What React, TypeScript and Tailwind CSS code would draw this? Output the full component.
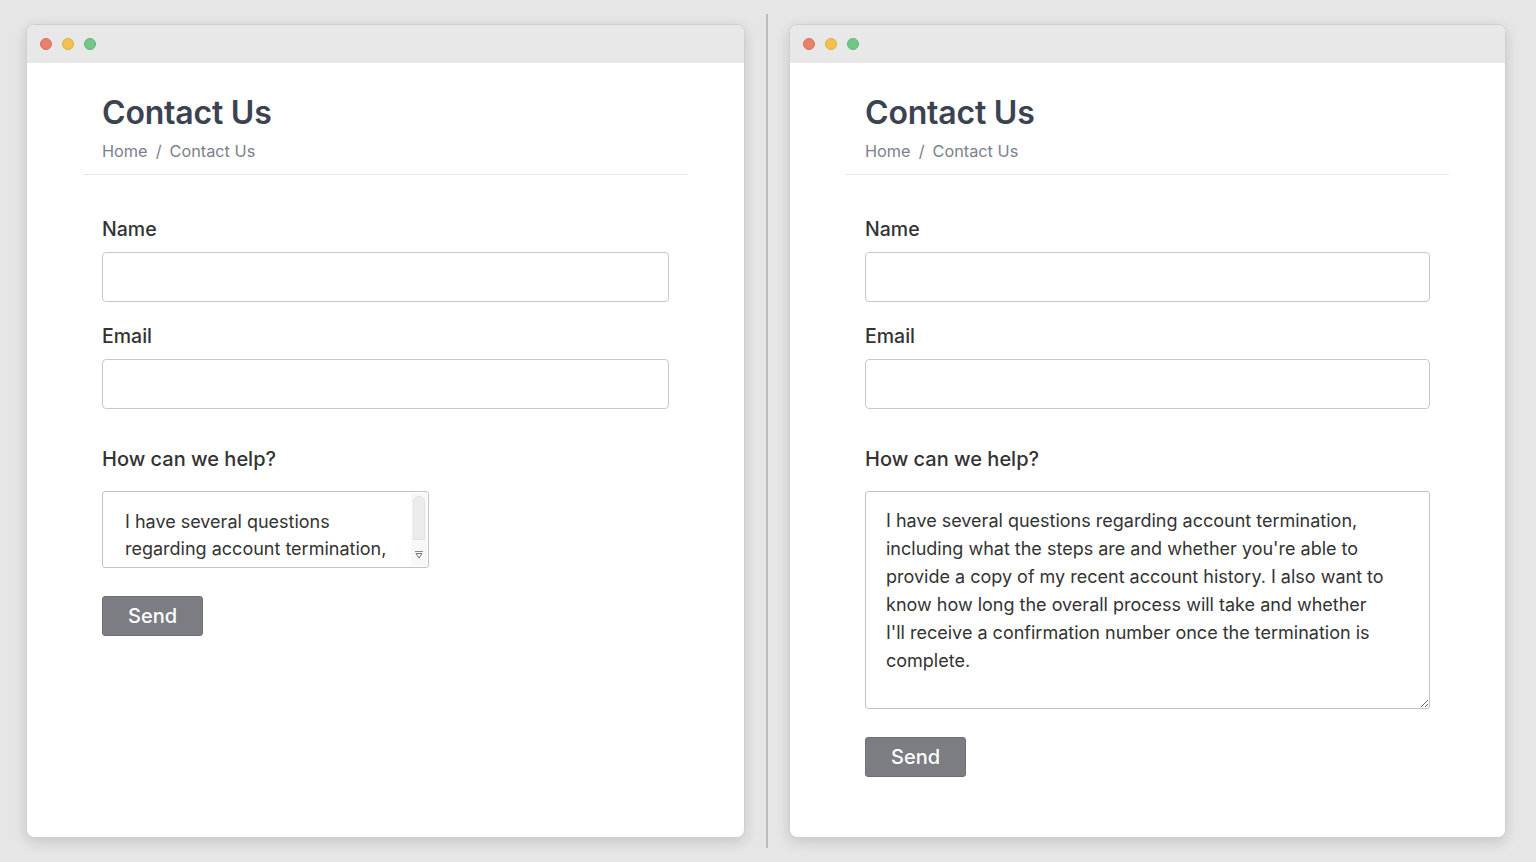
import React from 'react';

const LONG_TEXT =
  "I have several questions regarding account termination,\nincluding what the steps are and whether you're able to\nprovide a copy of my recent account history. I also want to\nknow how long the overall process will take and whether\nI'll receive a confirmation number once the termination is\ncomplete.";

const SHORT_TEXT =
  "I have several questions\nregarding account termination,\nincluding what the steps are and\nwhether you're able to provide a\ncopy of my recent account history.";

function TrafficLights() {
  return (
    <div className="flex items-center gap-[10px] pl-[13px]">
      <span className="block h-[12px] w-[12px] rounded-full bg-[#e8806c] border border-[#d8705e]" />
      <span className="block h-[12px] w-[12px] rounded-full bg-[#f2c04d] border border-[#e0ae3e]" />
      <span className="block h-[12px] w-[12px] rounded-full bg-[#72c687] border border-[#62b577]" />
    </div>
  );
}

function Field({ label }: { label: string }) {
  return (
    <div>
      <label className="block text-[19.5px] font-medium text-[#333] leading-[24px] mb-[11px]">
        {label}
      </label>
      <input
        type="text"
        className="block w-full h-[50px] rounded-[4px] border border-[#c9c9c9] bg-white px-3 focus:outline-none"
      />
    </div>
  );
}

// fake classic scrollbar for the small textarea
function Scrollbar() {
  return (
    <div className="absolute right-[2px] top-[2px] bottom-[2px] w-[16px] flex flex-col items-center bg-[#f8f8f8] pointer-events-none">
      <div className="mt-[3px] w-[12px] h-[44px] rounded-t-full rounded-b-[2px] bg-[#ececec] border border-[#e2e2e2]" />
      <div className="mt-auto mb-[6px] flex flex-col items-center">
        <svg width="10" height="10" viewBox="0 0 10 10">
          <line x1="1" y1="1.5" x2="9" y2="1.5" stroke="#888" strokeWidth="1" />
          <path d="M2 3.5 L8 3.5 L5 8 Z" fill="none" stroke="#777" strokeWidth="1" />
        </svg>
      </div>
    </div>
  );
}

function ContactWindow({ expanded }: { expanded: boolean }) {
  return (
    <div className="flex-1 flex flex-col bg-white rounded-[8px] border border-[#cfcfcf] shadow-[0_4px_14px_rgba(0,0,0,0.14)] overflow-hidden">
      <div className="h-[38px] shrink-0 flex items-center bg-[#e8e8e8]">
        <TrafficLights />
      </div>

      <div className="mx-[56px] pl-[19px] pt-[30px] pb-[12px] border-b border-[#e6e6e6]">
        <h1 className="text-[32px] font-semibold leading-[40px] text-[#3b4350] tracking-[-0.2px]">
          Contact Us
        </h1>
        <div className="mt-[7px] text-[16.3px] leading-[22px] text-[#7b818b]">
          <span>Home</span>
          <span className="mx-[8px]">/</span>
          <span>Contact Us</span>
        </div>
      </div>

      <form className="px-[75px] pt-[42px]" onSubmit={(e) => e.preventDefault()}>
        <Field label="Name" />
        <div className="mt-[22px]">
          <Field label="Email" />
        </div>

        <label className="block mt-[38px] text-[20px] font-medium text-[#333] leading-[24px]">
          How can we help?
        </label>

        {expanded ? (
          <textarea
            readOnly
            value={LONG_TEXT}
            className="mt-[20px] block w-full h-[218px] rounded-[3px] border border-[#c4c4c4] px-[20px] pt-[15px] text-[18px] leading-[28px] text-[#333] whitespace-pre overflow-hidden focus:outline-none resize"
          />
        ) : (
          <div className="relative mt-[20px] w-[327px] h-[77px]">
            <textarea
              readOnly
              value={SHORT_TEXT}
              className="block w-full h-full rounded-[3px] border border-[#c4c4c4] pl-[22px] pr-[20px] pt-[16px] text-[18px] leading-[27px] text-[#333] whitespace-pre overflow-hidden [scrollbar-width:none] focus:outline-none resize"
            />
            <Scrollbar />
          </div>
        )}

        <button
          type="submit"
          className="mt-[28px] w-[101px] h-[40px] rounded-[3px] bg-[#7b7d82] border border-[#6e7075] text-white text-[20px] font-medium"
        >
          Send
        </button>
      </form>
    </div>
  );
}

export default function App() {
  return (
    <div
      className="h-[862px] w-[1536px] bg-[#e6e6e6] flex pl-[26px] pr-[30px] py-[14px]"
      style={{ fontFamily: 'Inter, "Noto Sans", "Liberation Sans", sans-serif' }}
    >
      <div className="w-[719px] shrink-0 flex my-[10px]">
        <ContactWindow expanded={false} />
      </div>
      <div className="w-[2px] bg-[#bcbcbc] mx-[21px]" />
      <div className="flex-1 flex my-[10px]">
        <ContactWindow expanded />
      </div>
    </div>
  );
}
